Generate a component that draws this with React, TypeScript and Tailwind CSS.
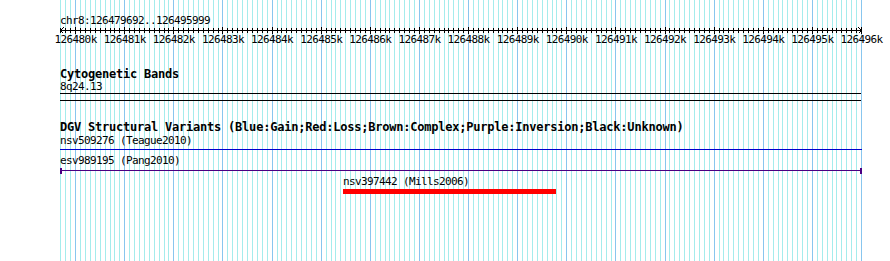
import React from 'react';

// Visible region of the genome browser panel
const START = 126479692;
const END = 126496000;
const LEFT = 60;
const TRACK_WIDTH = 801;

const toX = (bp: number) => LEFT + ((bp - START) * TRACK_WIDTH) / (END - START);

const minorLines: number[] = [];
for (let bp = 126479700; bp <= END; bp += 100) minorLines.push(bp);

const majorKb: number[] = [];
for (let kb = 126480; kb <= 126496; kb++) majorKb.push(kb);

const variants = [
  { id: 'nsv509276', study: 'Teague2010', kind: 'gain' },
  { id: 'esv989195', study: 'Pang2010', kind: 'inversion' },
];

const lossVariant = { id: 'nsv397442', study: 'Mills2006', start: 126485454, end: 126489790 };

const Grid: React.FC = () => (
  <svg className="absolute inset-0" width={890} height={261} shapeRendering="crispEdges">
    {minorLines.map((bp) => {
      const x = Math.round(toX(bp)) + 0.5;
      const major = bp % 1000 === 0;
      return (
        <line
          key={bp}
          x1={x}
          x2={x}
          y1={0}
          y2={261}
          stroke={major ? '#88c6ee' : '#a4ecec'}
          strokeWidth={1}
        />
      );
    })}
  </svg>
);

const Ruler: React.FC = () => (
  <div>
    <div className="h-[12px] leading-[12px] text-[11px] tracking-[-0.62px]">chr8:126479692..126495999</div>
    <svg width={803} height={5} className="block -ml-[1px] overflow-visible" shapeRendering="crispEdges">
      <line x1={1} x2={802} y1={3.5} y2={3.5} stroke="#000" />
      {minorLines.map((bp) => {
        const x = Math.round(toX(bp)) - LEFT + 1.5;
        const major = bp % 1000 === 0;
        return <line key={bp} x1={x} x2={x} y1={major ? 0 : 1} y2={major ? 7 : 6} stroke="#000" />;
      })}
      <polyline points="4.5,0.5 1.5,3.5 4.5,6.5" fill="none" stroke="#000" />
      <polyline points="799.5,0.5 802.5,3.5 799.5,6.5" fill="none" stroke="#000" />
    </svg>
    <div className="relative mt-[2px] h-[12px] leading-[12px] text-[11px] tracking-[-0.62px]">
      {majorKb.map((kb) => (
        <span
          key={kb}
          className="absolute top-0 -translate-x-1/2 whitespace-nowrap"
          style={{ left: toX(kb * 1000) - LEFT + 0.5 }}
        >
          {kb}k
        </span>
      ))}
    </div>
  </div>
);

const TrackTitle: React.FC<{ children: React.ReactNode; className?: string }> = ({ children, className }) => (
  <div className={`h-[13px] leading-[13px] text-[12px] font-bold tracking-[-0.22px] whitespace-nowrap ${className ?? ''}`}>
    {children}
  </div>
);

const Label: React.FC<{ children: React.ReactNode; className?: string; style?: React.CSSProperties }> = ({
  children,
  className,
  style,
}) => (
  <div className={`h-[12px] leading-[12px] text-[11px] tracking-[-0.62px] whitespace-nowrap ${className ?? ''}`} style={style}>
    {children}
  </div>
);

export default function App() {
  const lossLeft = toX(lossVariant.start) - LEFT;
  const lossWidth = toX(lossVariant.end) - toX(lossVariant.start);

  return (
    <div className="relative w-[890px] h-[261px] overflow-hidden bg-white text-black font-['DejaVu_Sans_Mono',monospace]">
      <Grid />
      <div className="relative pl-[60px] pt-[15px]">
        <Ruler />

        {/* Cytogenetic Bands */}
        <TrackTitle className="mt-[22px]">Cytogenetic Bands</TrackTitle>
        <Label>8q24.13</Label>
        <div className="h-[8px] w-[801px] border-y border-black" />

        {/* DGV */}
        <TrackTitle className="mt-[20px]">
          DGV Structural Variants (Blue:Gain;Red:Loss;Brown:Complex;Purple:Inversion;Black:Unknown)
        </TrackTitle>
        <Label className="mt-[1px]">
          {variants[0].id} ({variants[0].study})
        </Label>
        <div className="mt-[2px] h-[1px] w-[802px] bg-[#0000cd]" />

        <Label className="mt-[5px]">
          {variants[1].id} ({variants[1].study})
        </Label>
        <div className="mt-[1px] flex h-[6px] w-[802px] items-start">
          <div className="h-[6px] w-[2px] bg-[#4b0082]" />
          <div className="mt-[2px] h-[1px] flex-1 bg-[#4b0082]" />
          <div className="h-[6px] w-[2px] bg-[#4b0082]" />
        </div>

        <Label className="mt-[2px]" style={{ marginLeft: lossLeft }}>
          {lossVariant.id} ({lossVariant.study})
        </Label>
        <div className="mt-[1px] h-[5px] bg-[#ff0000]" style={{ marginLeft: lossLeft, width: lossWidth }} />
      </div>
    </div>
  );
}
